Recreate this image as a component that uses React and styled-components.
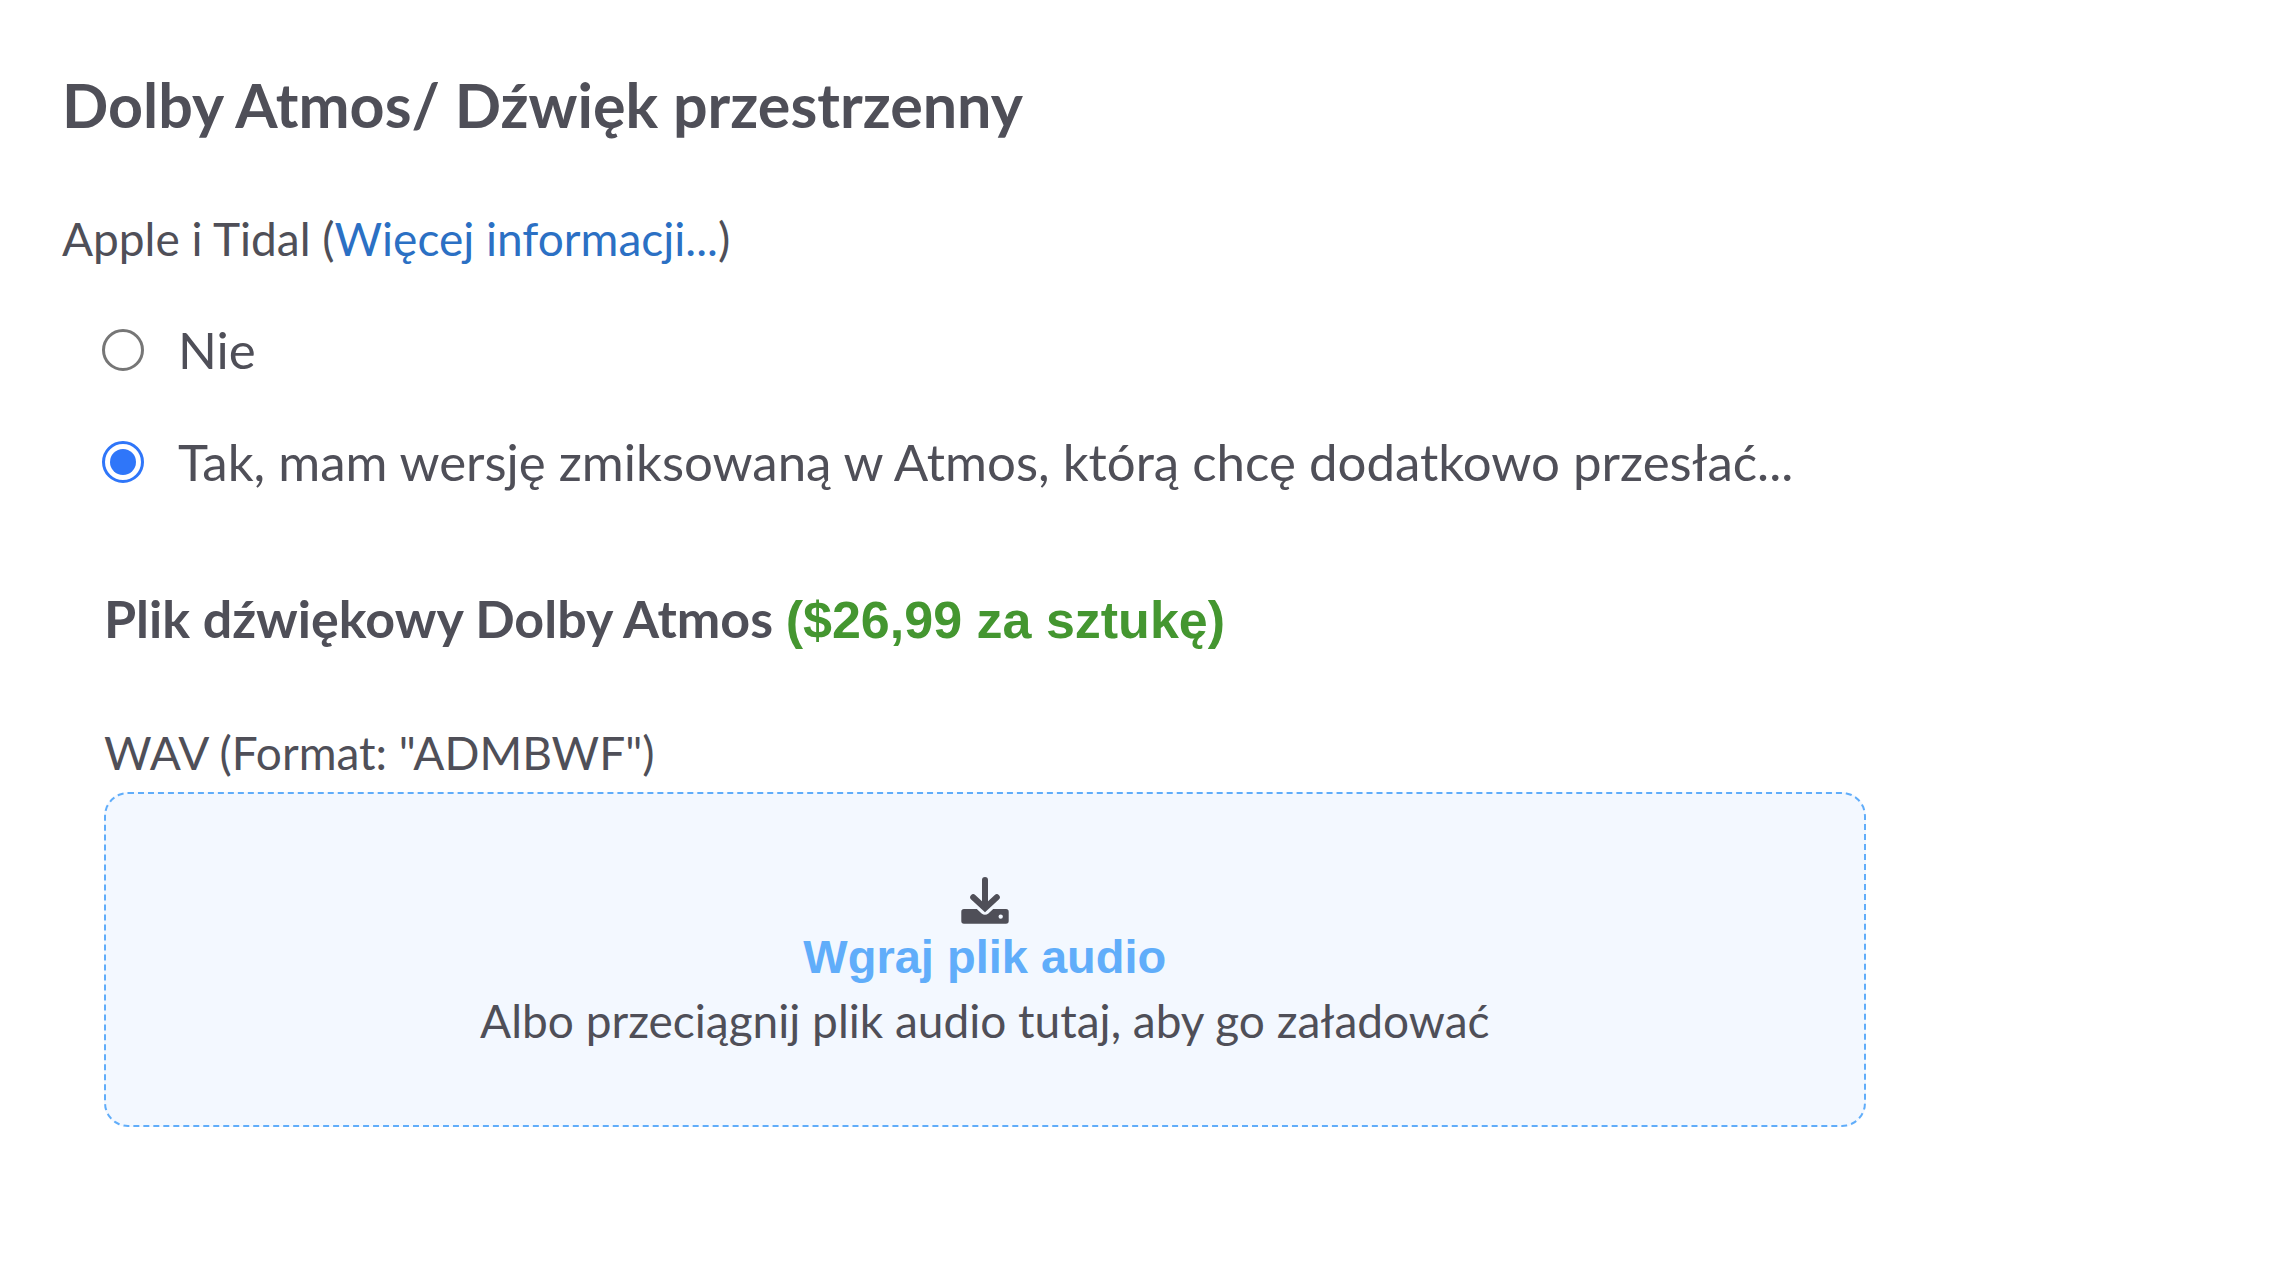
import React, { useRef, useState } from "react";
import styled, { createGlobalStyle } from "styled-components";

const GlobalStyle = createGlobalStyle`
  * {
    box-sizing: border-box;
  }

  body {
    margin: 0;
    background: #fff;
    color: #4f4f58;
    font-family: Lato, sans-serif;
  }
`;

const Page = styled.main`
  padding: 67px 78px 80px 62px;
`;

const Title = styled.h1`
  margin: 0 0 68px;
  font-size: 61px;
  font-weight: 700;
  line-height: 76px;
`;

const Text = styled.p`
  margin: 0;
  font-size: 46px;
  line-height: 56px;
`;

const InfoLink = styled.a`
  color: #2b70c4;
  text-decoration: none;
`;

const Options = styled.fieldset`
  display: flex;
  flex-direction: column;
  gap: 48px;
  margin: 51px 0 92px 40px;
  padding: 0;
  border: 0;
`;

const Option = styled.label`
  display: flex;
  align-items: center;
  gap: 34px;
  font-size: 51px;
  line-height: 64px;
  cursor: pointer;
`;

const Radio = styled.input`
  appearance: none;
  flex: none;
  width: 42px;
  height: 42px;
  margin: 0;
  border: 3px solid #767676;
  border-radius: 50%;
  background: #fff;

  &:checked {
    border-color: #2f76f9;
    padding: 5px;
    background: #2f76f9 content-box;
  }
`;

const Upload = styled.section`
  display: grid;
  grid-template-columns: 10fr 2fr;
  margin-left: 42px;

  > * {
    grid-column: 1;
  }
`;

const Subtitle = styled.h2`
  margin: 0 0 73px;
  font-size: 52px;
  font-weight: 700;
  line-height: 64px;
`;

const Price = styled.span`
  color: #449630;
  font-family: "Liberation Sans", sans-serif;
`;

const DropZone = styled.div`
  display: flex;
  flex-direction: column;
  align-items: center;
  margin-top: 11px;
  padding: 83px 24px 76px;
  border: 2px dashed #60adfa;
  border-radius: 24px;
  background: #f3f8ff;
`;

const UploadButton = styled.button`
  margin: 4px 0 8px;
  padding: 0;
  border: 0;
  background: none;
  color: #60adfa;
  font-family: "Liberation Sans", sans-serif;
  font-size: 47px;
  font-weight: 700;
  line-height: 56px;
  cursor: pointer;
`;

function DownloadIcon() {
  return (
    <svg width="48" height="48" viewBox="0 0 48 48" fill="none" aria-hidden="true">
      <path
        fill="#4f4f58"
        fillRule="evenodd"
        d="M3 32H15.8L20.6 36.5Q24 39.2 27.4 36.5L32.2 32H45Q47.7 32 47.7 34.7V44Q47.7 46.7 45 46.7H3Q.3 46.7 .3 44V34.7Q.3 32 3 32ZM39.7 37.4a2.2 2.2 0 1 0 0 4.4a2.2 2.2 0 1 0 0-4.4Z"
      />
      <path
        stroke="#4f4f58"
        strokeWidth="6"
        strokeLinecap="round"
        d="M24 3V30M12.2 20.2L24 31.2L35.8 20.2"
      />
    </svg>
  );
}

const options = [
  { value: "no", label: "Nie" },
  { value: "yes", label: "Tak, mam wersję zmiksowaną w Atmos, którą chcę dodatkowo przesłać..." },
];

export default function App() {
  const [atmos, setAtmos] = useState("yes");
  const fileInput = useRef(null);

  return (
    <Page>
      <GlobalStyle />
      <Title>Dolby Atmos/ Dźwięk przestrzenny</Title>
      <Text>
        Apple i Tidal (<InfoLink href="#info">Więcej informacji...</InfoLink>)
      </Text>

      <Options aria-label="Dolby Atmos">
        {options.map((option) => (
          <Option key={option.value}>
            <Radio
              type="radio"
              name="atmos"
              value={option.value}
              checked={atmos === option.value}
              onChange={() => setAtmos(option.value)}
            />
            {option.label}
          </Option>
        ))}
      </Options>

      {atmos === "yes" && (
        <Upload>
          <Subtitle>
            Plik dźwiękowy Dolby Atmos <Price>($26,99 za sztukę)</Price>
          </Subtitle>
          <Text>WAV (Format: "ADMBWF")</Text>
          <DropZone onDragOver={(e) => e.preventDefault()} onDrop={(e) => e.preventDefault()}>
            <DownloadIcon />
            <UploadButton type="button" onClick={() => fileInput.current.click()}>
              Wgraj plik audio
            </UploadButton>
            <input ref={fileInput} type="file" accept=".wav" aria-label="WAV" hidden />
            <Text>Albo przeciągnij plik audio tutaj, aby go załadować</Text>
          </DropZone>
        </Upload>
      )}
    </Page>
  );
}
